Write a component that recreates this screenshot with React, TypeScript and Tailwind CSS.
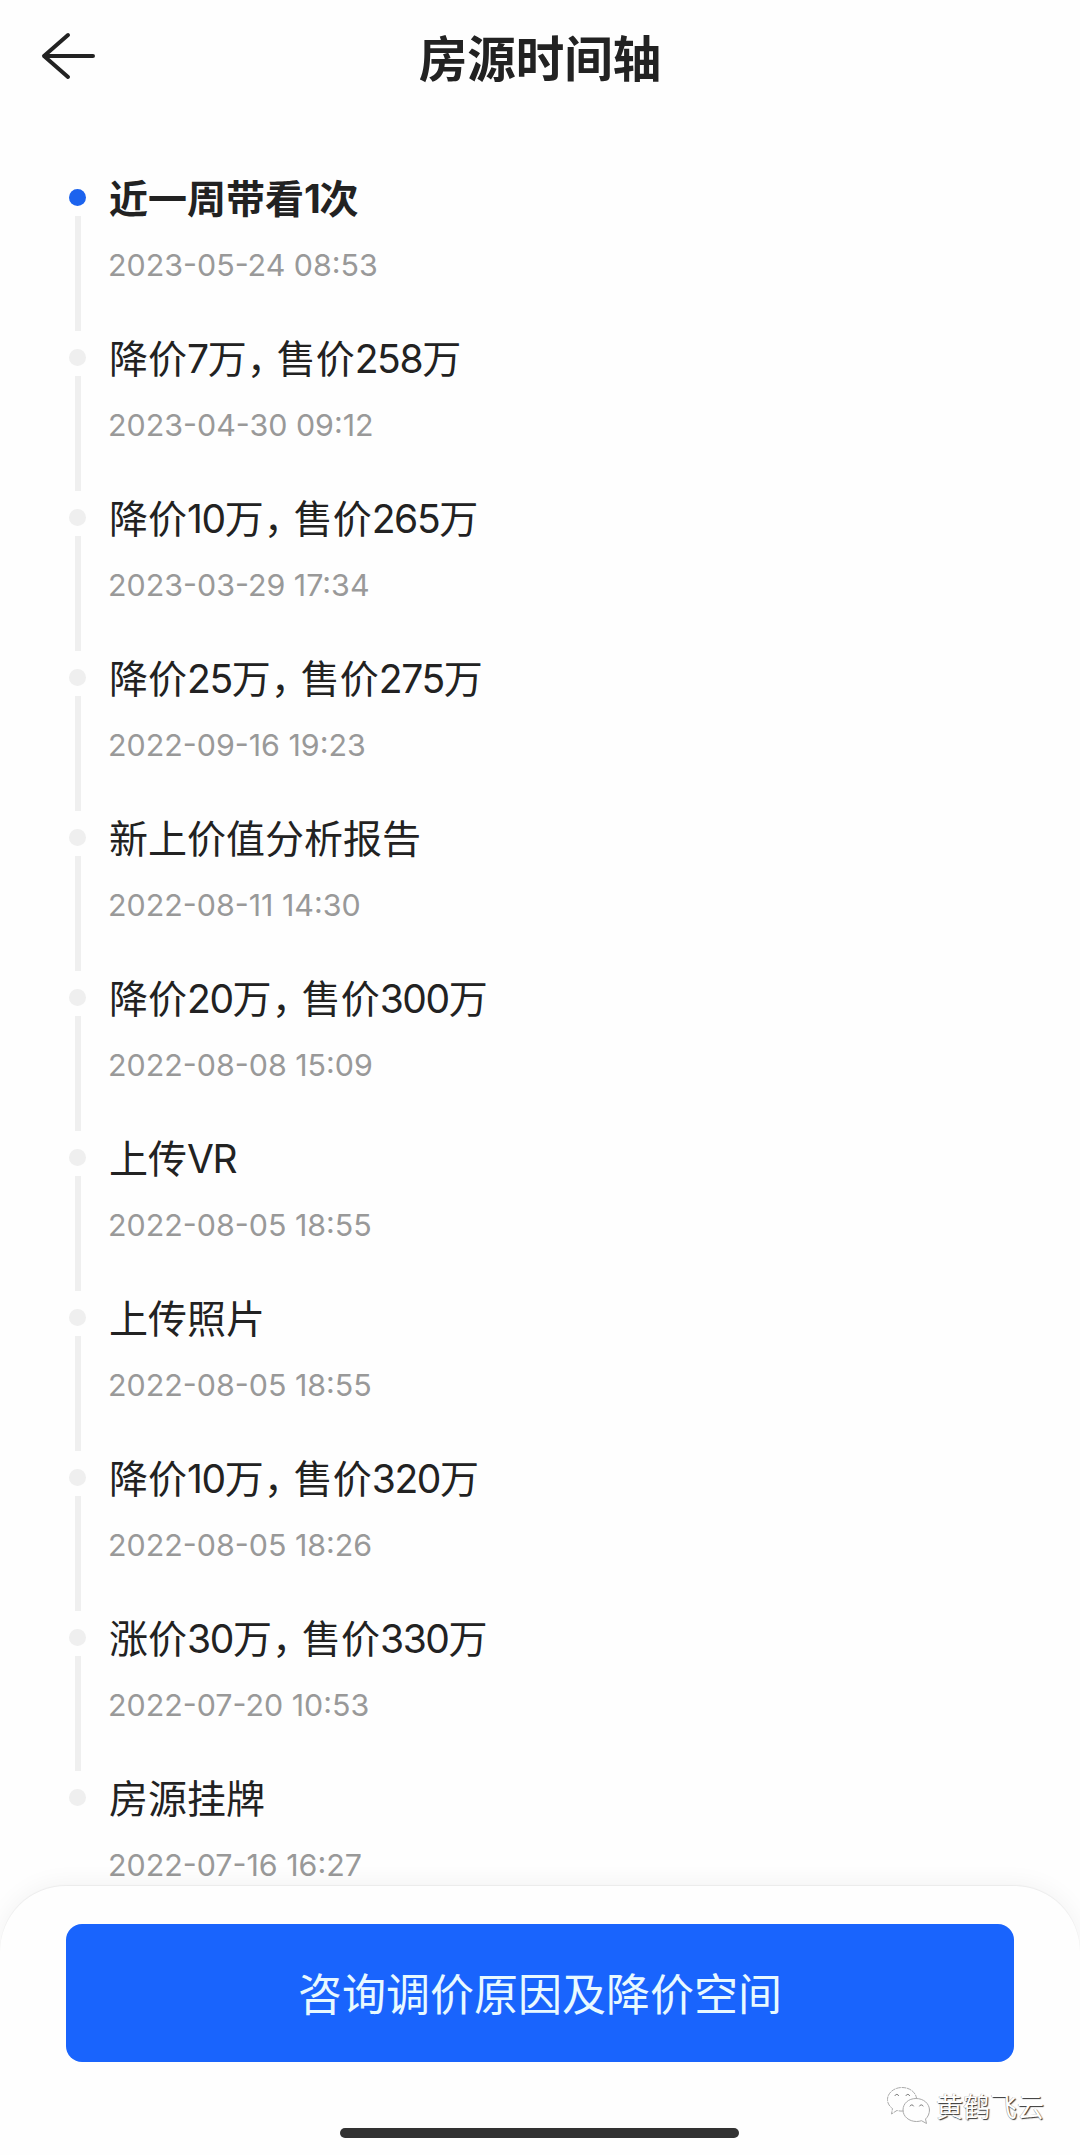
type TimelineEvent = {
  title: string;
  time: string;
};

const events: TimelineEvent[] = [
  { title: "近一周带看1次", time: "2023-05-24 08:53" },
  { title: "降价7万，售价258万", time: "2023-04-30 09:12" },
  { title: "降价10万，售价265万", time: "2023-03-29 17:34" },
  { title: "降价25万，售价275万", time: "2022-09-16 19:23" },
  { title: "新上价值分析报告", time: "2022-08-11 14:30" },
  { title: "降价20万，售价300万", time: "2022-08-08 15:09" },
  { title: "上传VR", time: "2022-08-05 18:55" },
  { title: "上传照片", time: "2022-08-05 18:55" },
  { title: "降价10万，售价320万", time: "2022-08-05 18:26" },
  { title: "涨价30万，售价330万", time: "2022-07-20 10:53" },
  { title: "房源挂牌", time: "2022-07-16 16:27" },
];

// Latin runs use Inter, the full-width comma is tightened up
function MixedText({ text }: { text: string }) {
  return (
    <>
      {text.split(/([0-9A-Z]+|，)/).map((part, i) => {
        if (part === "，") {
          return <span key={i} className="tracking-[-9px]">{part}</span>;
        }
        if (/^[0-9A-Z]/.test(part)) {
          return <span key={i} className="font-['Inter'] tracking-[-1.4px]">{part}</span>;
        }
        return part;
      })}
    </>
  );
}

function Header() {
  return (
    <header className="grid grid-cols-[1fr_auto_1fr] items-center h-[112px] px-[41px]">
      <svg className="w-[55px] h-[48px]" viewBox="0 0 55 48" fill="none" stroke="#222" strokeWidth="4" strokeLinecap="round" strokeLinejoin="round">
        <path d="M27 3 3 24l24 21M3 24h49" />
      </svg>
      <h1 className="text-[48.5px] leading-none font-bold">房源时间轴</h1>
    </header>
  );
}

function TimelineItem({ event, first, last }: { event: TimelineEvent; first: boolean; last: boolean }) {
  return (
    <li className="flex h-40 gap-[22px]">
      <div className="flex flex-col items-center w-[17px] gap-2.5 shrink-0">
        <div className={first ? "size-[17px] rounded-full bg-[#1c63ee]" : "size-[17px] rounded-full bg-[#efefef]"} />
        {!last && <div className="w-1.5 h-[115px] ml-px bg-[#efefef]" />}
      </div>
      <div className="-mt-[15px]">
        <p className={first ? "h-11 pl-px text-[39px] leading-[44px] font-bold" : "h-11 pl-px text-[39px] leading-[44px]"}>
          <MixedText text={event.title} />
        </p>
        <p className="mt-[25px] font-['Inter'] text-[30.4px] leading-[44px] text-[#999]">{event.time}</p>
      </div>
    </li>
  );
}

function Watermark() {
  return (
    <div className="absolute right-[36px] top-[199px] flex items-center gap-[5px]">
      <svg className="w-[45px] h-[40px]" viewBox="0 0 45 40" fill="none" stroke="#aaa" strokeWidth="1" strokeLinecap="round">
        <path d="M17 26c-2 .3-4 0-6-.6L5.500 29l1-5.500C3 21 1.500 18 1.500 14.500 1.500 8 8 2.500 16 2.500c7.500 0 13.500 4.500 14.500 10.500" strokeDasharray="4 1.500" />
        <path d="M43.500 25c0-6.500-6-11.500-13.500-11.500S17 18.500 17 25s6 11.500 13.500 11.500c2 0 3.500-.3 5-.8L40.500 38.500l-1-4.500c2.500-2 4-5.500 4-9Z" />
        <path d="M9 10.500c.6-1.600 3-1.600 3.600 0M20 10.500c.6-1.600 3-1.600 3.600 0M24 21c.6-1.600 3-1.600 3.600 0M33.500 21c.6-1.600 3-1.600 3.600 0" stroke="#777" />
      </svg>
      <span className="text-[27px] leading-none text-white [text-shadow:1px_1px_1px_#333,-0.500px_-0.500px_0.500px_#aaa]">黄鹤飞云</span>
    </div>
  );
}

function BottomSheet() {
  return (
    <footer className="relative flex flex-col items-center h-[269px] shrink-0 pt-[38px] rounded-t-[66px] bg-[#fefefe] shadow-[0_-2px_24px_rgba(0,0,0,0.05),0_-1px_1px_rgba(0,0,0,0.05)]">
      <button className="w-[948px] h-[138px] pb-[3px] rounded-[16px] bg-[#1964fd] text-[44px] leading-none text-[#e8f9ff]">
        咨询调价原因及降价空间
      </button>
      <div className="w-[399px] h-[10px] mt-[66px] mr-px rounded-full bg-[#323232]" />
      <Watermark />
    </footer>
  );
}

export default function App() {
  return (
    <div className="flex flex-col w-[1080px] h-[2155px] overflow-hidden bg-[#fefefe] text-[#222] font-['Noto_Sans_CJK_SC',sans-serif]">
      <Header />
      <main className="flex-1 min-h-0 pt-[77px] pl-[69px]">
        <ul>
          {events.map((event, i) => (
            <TimelineItem key={i} event={event} first={i === 0} last={i === events.length - 1} />
          ))}
        </ul>
      </main>
      <BottomSheet />
    </div>
  );
}
